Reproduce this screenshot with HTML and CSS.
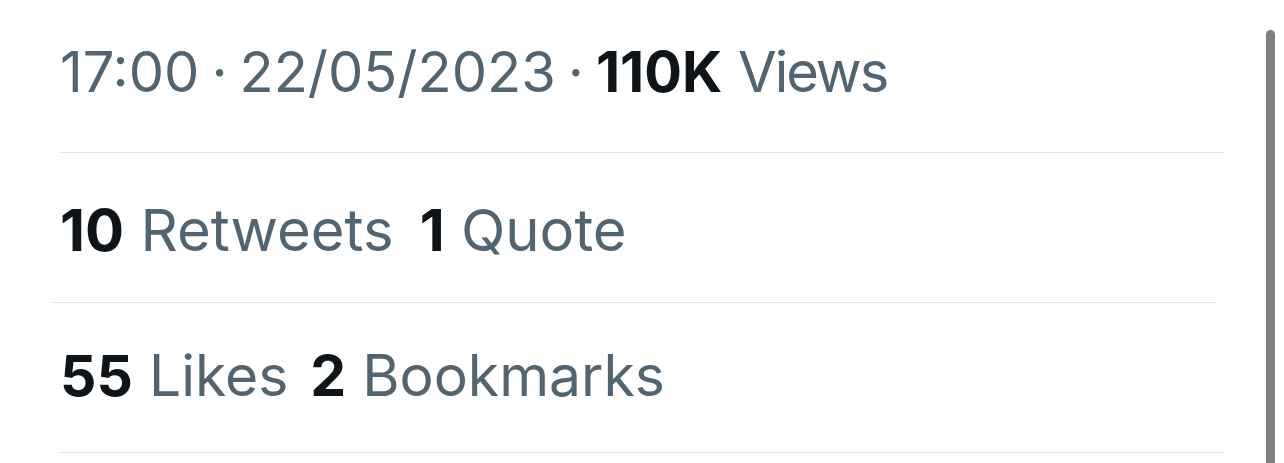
FILE: index.html
```html
<!DOCTYPE html>
<html lang="en">
<head>
  <meta charset="UTF-8" />
  <meta name="viewport" content="width=device-width, initial-scale=1.0" />
  <title>Tweet stats</title>
  <link rel="stylesheet" href="styles.css">
</head>
<body>
  <div class="stats">
    <div class="row row-time">
      <span>17:00</span>
      <span class="dot">·</span>
      <span>22/05/2023</span>
      <span class="dot">·</span>
      <span><b>110K</b> <span class="views">Views</span></span>
    </div>

    <div class="row row-retweets">
      <span class="stat"><b>10</b> Retweets</span>
      <span class="stat"><b>1</b> Quote</span>
    </div>

    <div class="row row-likes">
      <span class="stat"><b>55</b> Likes</span>
      <span class="stat"><b>2</b> Bookmarks</span>
    </div>
  </div>

  <div class="scrollbar"></div>
</body>
</html>
```

FILE: styles.css
```css
html, body {
  margin: 0;
  background: #fff;
  height: 100%;
  overflow: hidden;
}
body {
  font-family: Inter, 'Liberation Sans', sans-serif;
  font-size: 58px;
  color: #536471;
}
.stats {
  width: 1164px;
  margin-left: 60px;
}
.row {
  display: flex;
  align-items: center;
  height: 144px;
  border-bottom: 1px solid #e1e4e6;
  white-space: nowrap;
}
.row-time {
  font-size: 56px;
  height: 144px;
  padding-bottom: 8px;
}
.dot {
  margin: 0 12px;
}
.views {
  letter-spacing: -2px;
}
/* this divider sits a bit to the left in the shot */
.row-retweets {
  margin-left: -9px;
  margin-right: 9px;
  padding-left: 9px;
  padding-top: 5px;
}
.row-likes {
  font-size: 57px;
  padding-bottom: 5px;
}
.stat {
  margin-right: 26px;
}
.row-likes .stat {
  margin-right: 22px;
}
b {
  color: #0f1419;
  font-weight: 700;
}
.scrollbar {
  position: absolute;
  top: 30px;
  bottom: 0;
  left: 1266px;
  width: 9px;
  background: #7f7f7f;
  border-radius: 5px 5px 0 0;
}
```
